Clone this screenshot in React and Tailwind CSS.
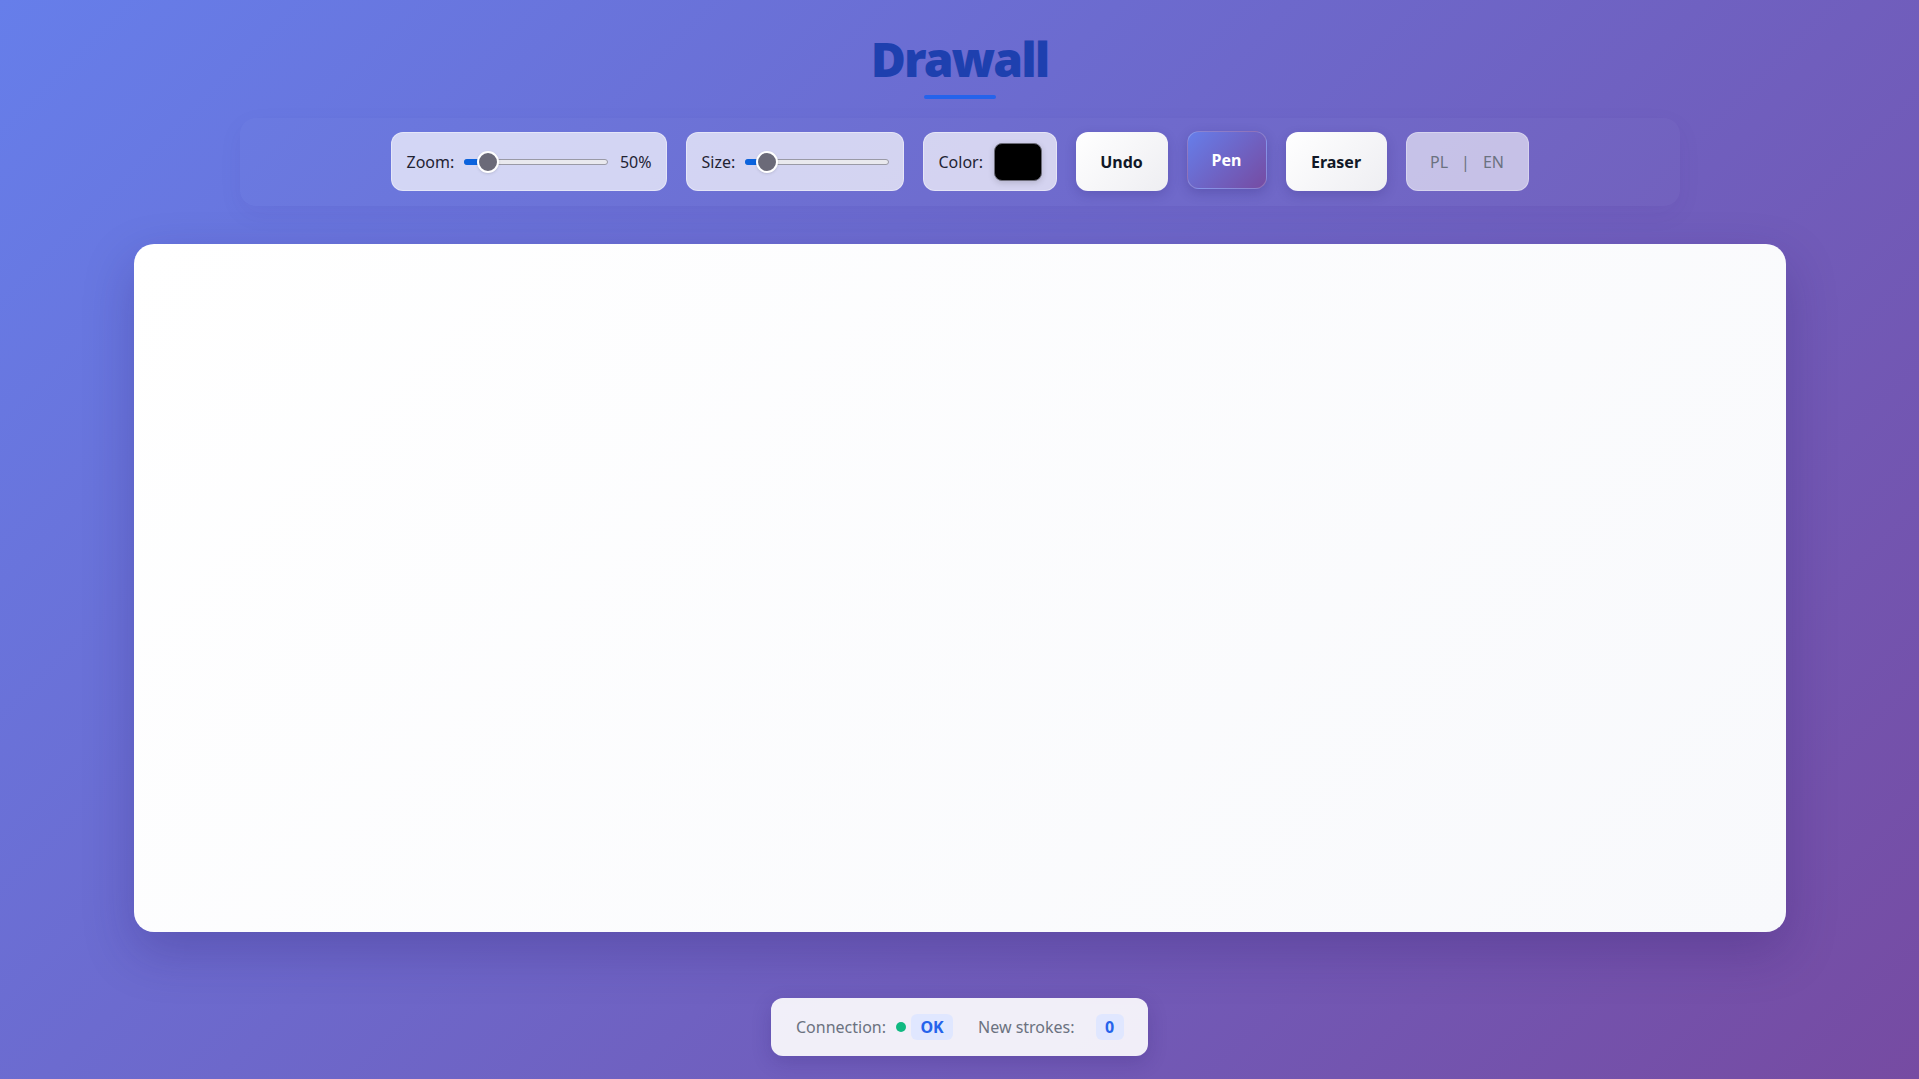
import React, { useState } from "react"

const font = { fontFamily: '"Noto Sans", "Open Sans", sans-serif' }

function Slider({ width, pos }) {
    return (
        <div className="relative h-[22px]" style={{ width }}>
            <div className="absolute left-0 right-0 top-[8px] h-[6px] rounded-full bg-[#e9e9ee] border border-[#9a9aa6]" />
            <div className="absolute left-0 top-[8px] h-[6px] rounded-l-full bg-[#0b63de]" style={{ width: pos }} />
            <div
                className="absolute top-0 h-[22px] w-[22px] rounded-full bg-[#6b6a78] border-2 border-white shadow-sm"
                style={{ left: pos - 11 }}
            />
        </div>
    )
}

function App() {
    const [tool, setTool] = useState("pen")

    return (
        <div
            className="min-h-screen w-full bg-[linear-gradient(135deg,#667eea_0%,#764ba2_100%)] flex flex-col items-center"
            style={font}
        >
            <h1 className="mt-[33px] text-[48px] leading-[52px] font-black text-[#1e40af] tracking-[-2px]">
                Drawall
            </h1>
            <div className="mt-[10px] h-[4px] w-[72px] rounded-full bg-[#2563eb]" />

            <div className="mt-[19px] w-[1440px] h-[88px] rounded-[16px] bg-white/[0.02] shadow-[0_8px_24px_rgba(60,40,140,0.06)] flex items-start justify-center gap-[19px] pt-[14px]">
                <div className="h-[59px] w-[276px] rounded-[12px] bg-white/70 border border-white/40 flex items-center pl-[15px] pr-[14px] text-[16px] text-[#1f2333]">
                    <span>Zoom:</span>
                    <div className="ml-[10px]"><Slider width={144} pos={24} /></div>
                    <span className="ml-auto">50%</span>
                </div>
                <div className="h-[59px] w-[218px] rounded-[12px] bg-white/70 border border-white/40 flex items-center pl-[15px] text-[16px] text-[#1f2333]">
                    <span>Size:</span>
                    <div className="ml-[10px]"><Slider width={144} pos={22} /></div>
                </div>
                <div className="h-[59px] w-[134px] rounded-[12px] bg-white/70 border border-white/40 flex items-center pl-[15px] text-[16px] text-[#1f2333]">
                    <span>Color:</span>
                    <div className="ml-[11px] h-[38px] w-[48px] rounded-[8px] bg-black border border-[#6b6b78] shadow-[0_2px_6px_rgba(0,0,0,0.15)]" />
                </div>
                <button className="h-[59px] w-[92px] rounded-[12px] bg-[linear-gradient(135deg,#ffffff,#eeeef2)] text-[16px] font-bold text-[#111827] shadow-[0_4px_12px_rgba(40,30,110,0.2)]">
                    Undo
                </button>
                <button
                    onClick={() => setTool("pen")}
                    className="h-[58px] w-[80px] -translate-y-px rounded-[12px] bg-[linear-gradient(135deg,#667eea,#764ba2)] border border-white/20 text-[16px] font-bold text-white shadow-[0_4px_12px_rgba(40,30,110,0.25)]"
                >
                    Pen
                </button>
                <button
                    onClick={() => setTool("eraser")}
                    className="h-[59px] w-[101px] rounded-[12px] bg-[linear-gradient(135deg,#ffffff,#eeeef2)] text-[16px] font-bold text-[#111827] shadow-[0_4px_12px_rgba(40,30,110,0.2)]"
                >
                    Eraser
                </button>
                <div className="h-[59px] w-[123px] rounded-[12px] bg-white/60 border border-white/30 flex items-center justify-center gap-[13px] text-[16px] text-[#6b7280]">
                    <span>PL</span>
                    <span>|</span>
                    <span>EN</span>
                </div>
            </div>

            <div className="mt-[38px] w-[1652px] h-[688px] rounded-[20px] bg-[linear-gradient(135deg,#ffffff,#f8f9fc)] shadow-[0_20px_50px_rgba(40,20,100,0.25)]" />

            <div className="mt-[66px] h-[58px] w-[377px] rounded-[12px] bg-white/90 shadow-[0_6px_20px_rgba(40,20,100,0.2)] flex items-center pl-[25px] text-[16px] text-[#6b7280]">
                <span>Connection:</span>
                <span className="ml-[10px] h-[10px] w-[10px] rounded-full bg-[#10b981]" />
                <span className="ml-[5px] h-[26px] w-[42px] rounded-[6px] bg-[#e0e7ff] text-[#2563eb] font-bold flex items-center justify-center">OK</span>
                <span className="ml-[25px]">New strokes:</span>
                <span className="ml-[21px] h-[26px] w-[28px] rounded-[6px] bg-[#e0e7ff] text-[#2563eb] font-bold flex items-center justify-center">0</span>
            </div>
        </div>
    )
}

export default App
